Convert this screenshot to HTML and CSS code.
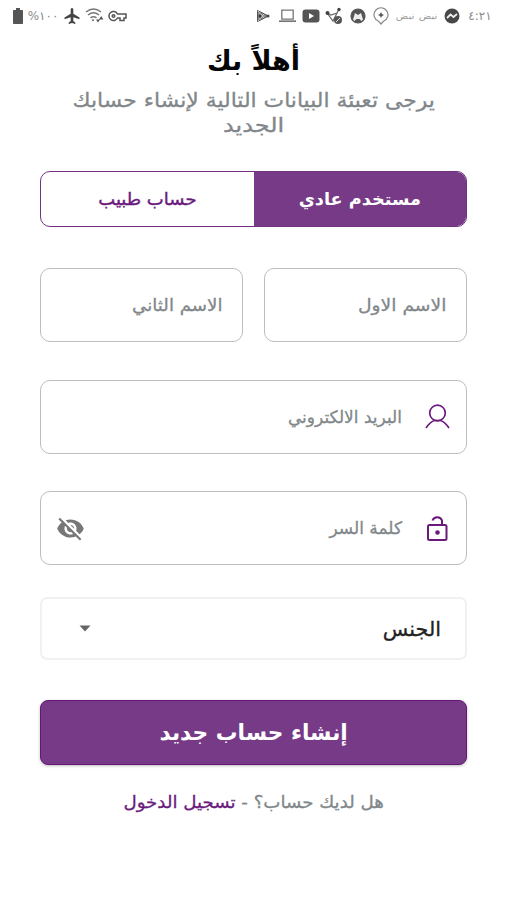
FILE: index.html
```html
<!DOCTYPE html>
<html lang="ar" dir="rtl">
<head>
<meta charset="utf-8">
<meta name="viewport" content="width=device-width, initial-scale=1">
<title>إنشاء حساب جديد</title>
<link rel="stylesheet" href="styles.css">
</head>
<body>
<header class="status" dir="ltr">
  <div class="status-group left">
    <svg class="battery" width="10" height="16" viewBox="0 0 10 16"><path fill="#555" d="M3 0h4v2h2.200q.8 0 .8.8v12.400q0 .8-.8.8H.8q-.8 0-.8-.8V2.800Q0 2 .8 2H3z"/></svg>
    <span class="percent"><span class="fit">%١٠٠</span></span>
    <svg width="16" height="16" viewBox="0 0 16 16"><path fill="#444" d="M8 0c.9 0 1.300.8 1.300 1.800v4L15.500 9.600v1.600L9.300 9.300v3.800l2 1.500V16L8 15l-3.300 1v-1.400l2-1.500V9.300L.5 11.200V9.600l6.200-3.800v-4C6.700.8 7.100 0 8 0z"/></svg>
    <svg class="wifi" width="20" height="15" viewBox="0 0 20 15" fill="none" stroke="#777" stroke-width="1.500"><path d="M1 4Q8.500 -2 16 4M3 7Q8.500 2.500 14 7M5.500 9.800Q8.500 7.500 11.500 9.800"/><path fill="#555" stroke="none" d="M6.500 11.500h3L8 13.500zM11 11.500h4l-2 3zM14 11.500l2.200-3.500 2.200 3.500z"/></svg>
    <svg class="key" width="19" height="12" viewBox="0 0 19 12" fill="none" stroke="#555" stroke-width="1.500"><path d="M9.500 4A4.500 4.500 0 1 0 9.500 8H12v2.500h4V8h2V4z"/><circle cx="5.500" cy="6" r="1.300"/></svg>
  </div>
  <div class="status-group right">
    <svg width="14" height="14" viewBox="0 0 14 14"><path fill="#888" stroke="#555" d="M1.500 1.500 12.500 7 1.500 12.500z"/><path d="m2 2 6 7M2 12l6-7" stroke="#ccc"/><circle cx="12" cy="7" r="1.500" fill="#444"/><circle cx="4" cy="7" r="1.500" fill="#333"/></svg>
    <svg width="17" height="14" viewBox="0 0 17 14"><path fill="none" stroke="#777" stroke-width="1.300" d="M2.800 1.200h11.400v9H2.800z"/><path stroke="#777" stroke-width="1.700" d="M0 12.200h17"/></svg>
    <svg width="18" height="14" viewBox="0 0 18 14"><rect x=".5" y=".5" width="17" height="13" rx="3" fill="#555"/><path fill="#fff" d="m7 4 5 3-5 3z"/></svg>
    <svg width="18" height="18" viewBox="0 0 18 18"><path fill="none" stroke="#666" stroke-width="1.200" d="m2 6 6 8 6-12M2 6l4 2 6-2"/><circle cx="2.500" cy="6" r="2" fill="#444"/><circle cx="14" cy="2.500" r="1.700" fill="#444"/><circle cx="13" cy="13" r="4" fill="#555"/><path d="m11 15 4-4" stroke="#ddd"/></svg>
    <svg width="16" height="16" viewBox="0 0 16 16"><circle cx="8" cy="8" r="7" fill="#555" stroke="#555" stroke-width="1.200"/><path fill="#eee" d="M3 11.500 5 5l3 2 3-2 2 6.500-1.500 1.500-2-2H6.500l-2 2z"/></svg>
    <svg width="16" height="18" viewBox="0 0 16 18"><path fill="none" stroke="#888" stroke-width="1.200" d="M8 17 5.500 14.300a7 7 0 1 1 5 0z"/><path fill="#555" d="M8 5 9 7l2 1-2 1-1 2-1-2-2-1 2-1z"/></svg>
    <span class="mini"><span class="fit">نبض</span></span>
    <span class="mini"><span class="fit">نبض</span></span>
    <svg width="16" height="16" viewBox="0 0 16 16"><circle cx="8" cy="8" r="7.500" fill="#484848"/><path fill="none" stroke="#eee" stroke-width="1.800" d="m3 10 3.500-3.500 3 2.500L13 6"/></svg>
    <span class="clock">٤:٢١</span>
  </div>
</header>
<main>
  <h1>أهلاً بك</h1>
  <p class="intro"><span class="fit intro-a">يرجى تعبئة البيانات التالية لإنشاء حسابك</span><span class="fit intro-b">الجديد</span></p>
  <div class="tabs">
    <div class="tab active"><span class="fit">مستخدم عادي</span></div>
    <div class="tab doctor"><span class="fit">حساب طبيب</span></div>
  </div>
  <div class="names">
    <div class="field first"><span class="fit">الاسم الاول</span></div>
    <div class="field second"><span class="fit">الاسم الثاني</span></div>
  </div>
  <div class="field email">
    <svg width="26" height="26" viewBox="0 0 26 26" fill="none" stroke="#6a197d" stroke-width="1.700"><circle cx="13.500" cy="9" r="7.800"/><path d="M2 24Q6.500 17.500 10.500 16.500h6q4 1 8.500 7.500"/></svg>
    <span class="fit">البريد الالكتروني</span>
  </div>
  <div class="field password">
    <svg width="26" height="28" viewBox="0 0 26 28" fill="none" stroke="#6a197d" stroke-width="2"><rect x="4" y="11" width="18.500" height="15" rx="1.500"/><path d="M8.500 6.500a5 4.700 0 0 1 9.500 0V11"/><circle cx="13.500" cy="18.500" r="1.300" fill="#6a197d"/></svg>
    <span class="fit">كلمة السر</span>
    <svg class="eye" width="29" height="29" viewBox="0 0 24 24"><path fill="#777" d="M12 7c2.760 0 5 2.240 5 5 0 .65-.13 1.260-.36 1.830l2.920 2.920c1.510-1.260 2.700-2.890 3.430-4.750-1.730-4.390-6-7.500-11-7.500-1.400 0-2.740.25-3.980.7l2.160 2.160C10.740 7.130 11.350 7 12 7zM2 4.270l2.280 2.280.46.46C3.080 8.300 1.780 10.020 1 12c1.730 4.390 6 7.500 11 7.500 1.550 0 3.030-.3 4.380-.84l.42.42L19.730 22 21 20.730 3.270 3 2 4.270zM7.530 9.800l1.550 1.550c-.05.21-.08.43-.08.65 0 1.660 1.340 3 3 3 .22 0 .44-.03.65-.08l1.550 1.550c-.67.33-1.410.53-2.200.53-2.760 0-5-2.240-5-5 0-.79.2-1.530.53-2.200zm4.310-.78 3.150 3.150.02-.16c0-1.660-1.340-3-3-3l-.17.010z"/></svg>
  </div>
  <div class="select"><span class="fit">الجنس</span><svg width="12" height="7" viewBox="0 0 12 7"><path fill="#666" d="M.5.500h11L6 6.500z"/></svg></div>
  <button class="submit" type="button"><span class="fit">إنشاء حساب جديد</span></button>
  <p class="login"><span class="fit">هل لديك حساب؟ - <a>تسجيل الدخول</a></span></p>
</main>
</body>
</html>
```
FILE: styles.css
```css
* { box-sizing: border-box; }
body { margin: 0; background: #fff; font-family: "DejaVu Sans", sans-serif; color: #81878a; }
svg { display: block; flex: none; }
.fit { display: inline-block; white-space: nowrap; }
.status { height: 32px; display: flex; justify-content: space-between; padding: 0 10px 0 13px; font-size: 12px; color: #8a8a8a; }
.status-group { display: flex; align-items: center; height: 31px; }
.percent { width: 30px; margin: 0 6px 0 5px; display: flex; justify-content: center; }
.wifi { margin-left: 5px; }
.key { margin-left: 3px; }
.right { display: grid; grid-template-columns: repeat(9, 23.600px) 32px; justify-items: center; }
.mini { font-size: 9px; color: #999; }
.mini .fit { transform: scaleX(1.150); }
main { padding: 0 39px 0 40px; }
h1 { margin: 9px 0 0; height: 40px; line-height: 40px; font-size: 27px; color: #050505; text-align: center; }
.intro { margin: 7px 0 0; height: 52px; display: flex; flex-direction: column; align-items: center; font-size: 20px; line-height: 25px; -webkit-text-stroke: .3px; }
.intro-a { transform: scaleX(1.093); }
.intro-b { transform: scaleX(1.200); }
.tabs { margin-top: 31px; height: 56px; display: flex; border: 1px solid #71327f; border-radius: 10px; overflow: hidden; color: #6a197d; font-size: 17px; }
.tab { flex: 1; display: flex; align-items: center; justify-content: center; }
.tab.active { background: #763a86; color: #fff; font-weight: bold; }
.active .fit { transform: scaleX(1.040); }
.doctor .fit { transform: scaleX(1.060); -webkit-text-stroke: .4px; }
.names { display: flex; gap: 21px; margin-top: 41px; }
.names .field { flex: 1; margin: 0; padding: 0 20px; }
.field { height: 74px; display: flex; align-items: center; border: 1px solid #bdbdbd; border-radius: 10px; font-size: 17px; padding: 0 16px 0 15px; }
.field .fit { transform-origin: right center; -webkit-text-stroke: .3px; }
.first .fit { transform: scaleX(1.100); }
.second .fit { transform: scaleX(1.070); }
.field.email { margin-top: 38px; }
.field.password { margin-top: 37px; }
.field > svg + .fit { margin-right: 22px; }
.eye { margin-right: auto; }
.select { margin-top: 32px; height: 63px; display: flex; align-items: center; justify-content: space-between; border: 2px solid #f1f1f1; border-radius: 7px; padding: 0 24px 0 37px; color: #222; font-size: 20px; }
.select .fit { transform: scaleX(1.040); transform-origin: right center; -webkit-text-stroke: .3px; }
.submit { margin: 40px 0 0; padding: 0; width: 100%; height: 65px; display: flex; align-items: center; justify-content: center; border: 1px solid #651776; border-radius: 8px; background: #763a86; color: #fff; font: bold 22px "DejaVu Sans", sans-serif; box-shadow: 0 1px 3px #bbb; }
.submit .fit { transform: scaleX(.985); }
.login { margin: 22px 0 0; height: 30px; line-height: 30px; text-align: center; font-size: 17px; }
.login .fit { transform: scaleX(1.070); -webkit-text-stroke: .3px; }
.login a { color: #6a197d; }
```
